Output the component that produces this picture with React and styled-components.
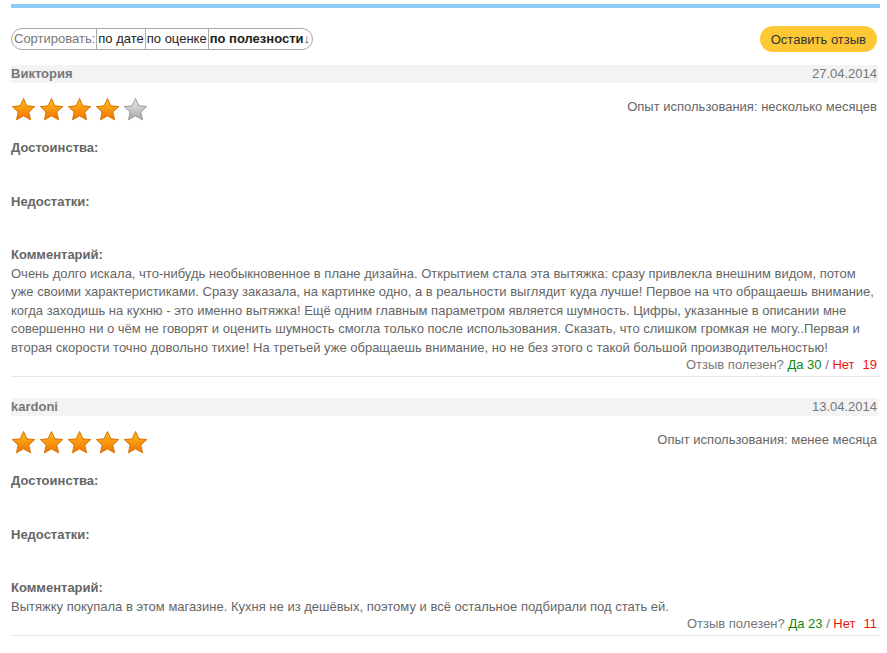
import React from 'react';
import styled, { createGlobalStyle } from 'styled-components';

const GlobalStyle = createGlobalStyle`
body {
	margin: 0;
	background: #fff;
	font-family: "Liberation Sans", Arial, sans-serif;
	font-size: 13px;
	color: #666;
}
`;

const Page = styled.div`
width: 869px;
margin-left: 11px;
padding-top: 4px;
`;

const TopBar = styled.div`
height: 4px;
background: #8ccdf7;
`;

const Toolbar = styled.div`
display: flex;
justify-content: space-between;
align-items: center;
height: 26px;
margin: 18px 3px 13px 0;
`;

const Sorter = styled.div`
display: flex;
align-items: stretch;
height: 22px;
border: 1px solid #a9a9a9;
border-radius: 11px;
box-sizing: border-box;
overflow: hidden;
line-height: 20px;
`;

const SortLabel = styled.span`
color: #777;
padding: 0 1px 0 2px;
`;

const SortItem = styled.span`
color: #222;
padding: 0 1px;
border-left: 1px solid #a9a9a9;
font-weight: ${props => (props.active ? 'bold' : 'normal')};
cursor: pointer;
`;

const Arrow = styled.span`
font-weight: normal;
color: #555;
padding-right: 1px;
`;

const Button = styled.button`
font: inherit;
color: #333;
background: #fdc833;
border: none;
border-radius: 13px;
height: 26px;
padding: 0 11px;
cursor: pointer;
`;

const Review = styled.div`
margin-bottom: 21px;
`;

const Header = styled.div`
display: flex;
justify-content: space-between;
height: 18px;
line-height: 18px;
background: #f3f3f3;
margin-right: 2px;
padding-right: 1px;
`;

const Name = styled.span`
font-weight: bold;
color: #777;
`;

const Date = styled.span`
color: #777;
`;

const RatingRow = styled.div`
display: flex;
justify-content: space-between;
align-items: flex-start;
margin: 14px 3px 17px 0;
line-height: 20px;
`;

const Stars = styled.div`
display: flex;
gap: 3px;
`;

const Experience = styled.span`
color: #666;
`;

const Section = styled.div`
line-height: 18.5px;
margin-bottom: ${props => (props.last ? '0' : '16.5px')};
`;

const Label = styled.div`
font-weight: bold;
color: #666;
`;

const Value = styled.div`
min-height: 18.5px;
color: #666;
padding-right: 3px;
`;

const Helpful = styled.div`
text-align: right;
line-height: 16px;
color: #777;
padding-right: 3px;
padding-bottom: 3px;
border-bottom: 1px solid #e6e6e6;
`;

const Yes = styled.span`
color: #118811;
`;

const No = styled.span`
color: #ee1111;
`;

const Count = styled.span`
color: #ee1111;
margin-left: 8px;
`;

const Star = ({ filled }) => {
	const id = filled ? 'starOrange' : 'starGray';
	return (
		<svg width="25" height="25" viewBox="0 0 25 25">
			<defs>
				<linearGradient id={id} x1="0" y1="0" x2="0" y2="1">
					{filled ? (
						<>
							<stop offset="0" stopColor="#ffbd1f" />
							<stop offset="1" stopColor="#f27400" />
						</>
					) : (
						<>
							<stop offset="0" stopColor="#ececec" />
							<stop offset="1" stopColor="#a6a6a6" />
						</>
					)}
				</linearGradient>
			</defs>
			<path
				d="M12.5 1.5 L15.8 8.8 L23.7 9.6 L17.8 15 L19.5 22.8 L12.5 18.8 L5.5 22.8 L7.2 15 L1.3 9.6 L9.2 8.8 Z"
				fill={`url(#${id})`}
				stroke={filled ? '#d97000' : '#9a9a9a'}
				strokeWidth="1"
				strokeLinejoin="round"
			/>
		</svg>
	);
};

const reviews = [
	{
		name: 'Виктория',
		date: '27.04.2014',
		rating: 4,
		experience: 'несколько месяцев',
		comment:
			'Очень долго искала, что-нибудь необыкновенное в плане дизайна. Открытием стала эта вытяжка: сразу привлекла внешним видом, потом уже своими характеристиками. Сразу заказала, на картинке одно, а в реальности выглядит куда лучше! Первое на что обращаешь внимание, когда заходишь на кухню - это именно вытяжка! Ещё одним главным параметром является шумность. Цифры, указанные в описании мне совершенно ни о чём не говорят и оценить шумность смогла только после использования. Сказать, что слишком громкая не могу..Первая и вторая скорости точно довольно тихие! На третьей уже обращаешь внимание, но не без этого с такой большой производительностью!',
		yes: 30,
		no: 19,
	},
	{
		name: 'kardoni',
		date: '13.04.2014',
		rating: 5,
		experience: 'менее месяца',
		comment: 'Вытяжку покупала в этом магазине. Кухня не из дешёвых, поэтому и всё остальное подбирали под стать ей.',
		yes: 23,
		no: 11,
	},
];

export default function App() {
	return (
		<Page>
			<GlobalStyle />
			<TopBar />
			<Toolbar>
				<Sorter>
					<SortLabel>Сортировать:</SortLabel>
					<SortItem>по дате</SortItem>
					<SortItem>по оценке</SortItem>
					<SortItem active>
						по полезности<Arrow>↓</Arrow>
					</SortItem>
				</Sorter>
				<Button>Оставить отзыв</Button>
			</Toolbar>
			{reviews.map(r => (
				<Review key={r.name}>
					<Header>
						<Name>{r.name}</Name>
						<Date>{r.date}</Date>
					</Header>
					<RatingRow>
						<Stars>
							{[1, 2, 3, 4, 5].map(i => (
								<Star key={i} filled={i <= r.rating} />
							))}
						</Stars>
						<Experience>Опыт использования: {r.experience}</Experience>
					</RatingRow>
					<Section>
						<Label>Достоинства:</Label>
						<Value />
					</Section>
					<Section>
						<Label>Недостатки:</Label>
						<Value />
					</Section>
					<Section last>
						<Label>Комментарий:</Label>
						<Value>{r.comment}</Value>
					</Section>
					<Helpful>
						Отзыв полезен? <Yes>Да {r.yes}</Yes> / <No>Нет</No>
						<Count>{r.no}</Count>
					</Helpful>
				</Review>
			))}
		</Page>
	);
}
